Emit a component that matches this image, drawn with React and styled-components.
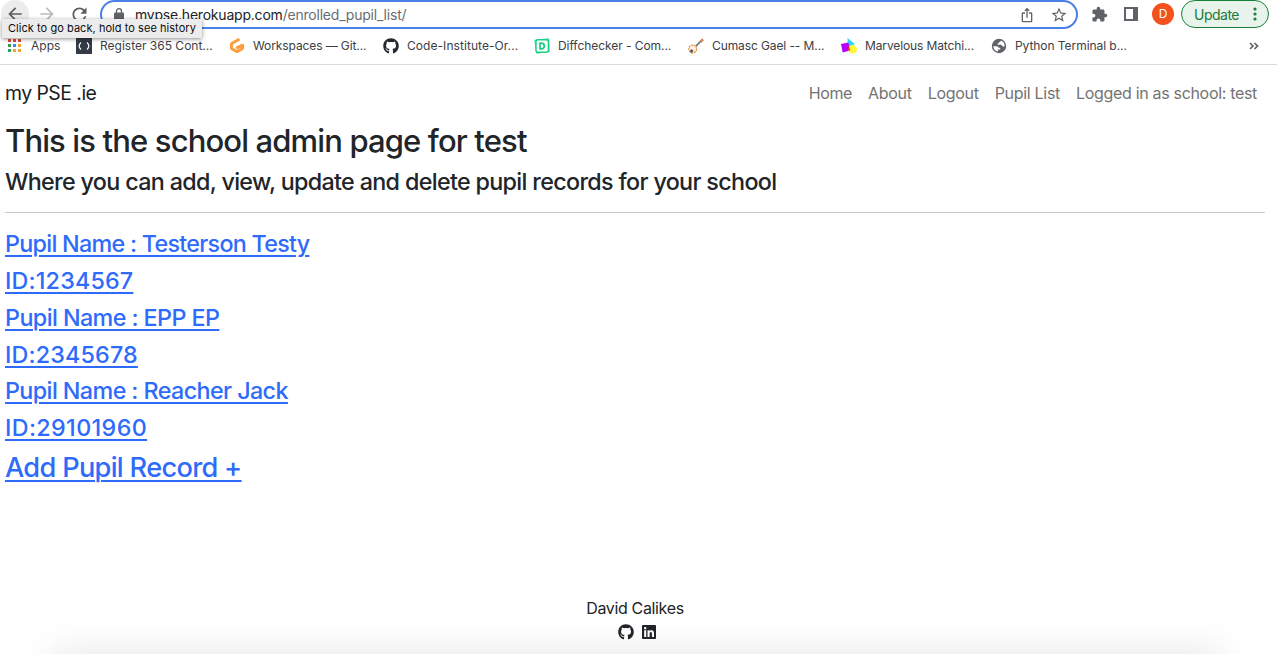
import React from "react";
import styled, { createGlobalStyle } from "styled-components";
import { FaGithub, FaLinkedin } from "react-icons/fa";
import {
  MdArrowBack, MdArrowForward, MdRefresh, MdExtension, MdStarBorder, MdOutlineIosShare,
} from "react-icons/md";

const GlobalStyle = createGlobalStyle`
  * { box-sizing: border-box; }
  html, body { margin: 0; background: #fff; overflow: hidden; }
  body { font-family: Inter, "Liberation Sans", sans-serif; color: #212529; }
`;

const Screen = styled.div`
  position: relative;
  display: flex;
  flex-direction: column;
  width: 1277px;
  height: 654px;
  overflow: hidden;
`;

const Toolbar = styled.div`
  display: flex;
  align-items: center;
  height: 28px;
  padding-right: 8px;
`;

const NavButton = styled.div`
  display: flex;
  align-items: center;
  justify-content: center;
  width: 28px;
  height: 28px;
  border-radius: 50%;
  margin-left: ${(p) => p.$left}px;
  color: ${(p) => (p.$dim ? "#b9bbbe" : "#5a5d61")};
  background: ${(p) => (p.$active ? "#ececed" : "transparent")};
`;

const AddressBar = styled.div`
  display: flex;
  align-items: center;
  width: 978px;
  height: 29px;
  margin: 0 0 -1px 7px;
  padding: 0 8px 0 12px;
  border: 2px solid #4a80e8;
  border-radius: 15px;
  color: #5f6368;
`;

const Url = styled.span`
  flex: 1;
  margin-left: 11px;
  font-size: 14px;
  line-height: 20px;
  letter-spacing: -0.21px;
  color: #6a6d71;
  b { font-weight: 400; color: #202124; }
`;

const BarIcon = styled.span`
  display: flex;
  margin-left: ${(p) => p.$left || 0}px;
  color: #5f6368;
`;

const Avatar = styled.div`
  width: 22px;
  height: 22px;
  margin-left: 14px;
  border-radius: 50%;
  background: #f4511e;
  color: #fff;
  font-size: 12px;
  line-height: 22px;
  text-align: center;
`;

const UpdateButton = styled.div`
  display: flex;
  align-items: center;
  justify-content: space-between;
  width: 88px;
  height: 28px;
  margin-left: 7px;
  padding: 0 11px 0 12px;
  border: 1px solid #188038;
  border-radius: 14px;
  background: #e8f3ec;
  color: #1c7a3c;
  font-size: 14px;
  letter-spacing: -0.5px;
`;

const Bookmarks = styled.div`
  display: flex;
  align-items: center;
  height: 37px;
  padding: 0 18px 0 7px;
  border-bottom: 1px solid #d9dadc;
`;

const Bookmark = styled.div`
  display: flex;
  align-items: center;
  width: ${(p) => p.$width}px;
  gap: 8px;
  svg { flex: none; }
`;

const BookmarkTitle = styled.span`
  font-size: 12px;
  line-height: 18px;
  white-space: nowrap;
  letter-spacing: ${(p) => p.$track || 0}px;
  color: #3c4043;
`;

const Overflow = styled.span`
  display: flex;
  margin-left: auto;
  color: #5f6368;
`;

const Tooltip = styled.div`
  position: absolute;
  left: 2px;
  top: 19px;
  width: 200px;
  height: 19px;
  padding-left: 6px;
  background: #ececec;
  box-shadow: 0 1px 4px rgba(0, 0, 0, 0.45);
  color: #0c0c0c;
  font-size: 11px;
  line-height: 19px;
  white-space: nowrap;
  letter-spacing: 0.05px;
`;

const Page = styled.main`
  display: flex;
  flex-direction: column;
  flex: 1;
  padding: 0 12px 0 5px;
  background: #fff;
`;

const SiteNav = styled.nav`
  display: flex;
  align-items: center;
  justify-content: space-between;
  height: 56px;
  padding-right: 8px;
`;

const Brand = styled.a`
  font-size: 19.4px;
  line-height: 30px;
  letter-spacing: -0.52px;
  color: #1a1c1e;
`;

const Links = styled.div`
  display: flex;
  gap: 16px;
`;

const NavLink = styled.a`
  font-size: 16px;
  line-height: 24px;
  letter-spacing: ${(p) => p.$track}px;
  color: #737373;
  white-space: nowrap;
`;

const Title = styled.h2`
  margin: 1px 0 7px;
  font-size: 31px;
  line-height: 38px;
  font-weight: 500;
  letter-spacing: -0.86px;
`;

const Subtitle = styled.h4`
  margin: 0;
  font-size: 23.3px;
  line-height: 29px;
  font-weight: 500;
  letter-spacing: -0.66px;
`;

const Rule = styled.hr`
  flex: none;
  width: 100%;
  height: 1px;
  margin: 16px 0 17.3px;
  border: 0;
  background: #c8c9ca;
`;

const Record = styled.h4`
  margin: 0 0 8px;
  font-size: 23.3px;
  line-height: 28.8px;
  font-weight: 500;
  letter-spacing: ${(p) => p.$track}px;
`;

const AddRecord = styled.h3`
  margin: 0;
  font-size: 27.2px;
  line-height: 33.6px;
  font-weight: 500;
  letter-spacing: -0.69px;
`;

const RecordLink = styled.a`
  color: #2f6bfb;
  text-decoration: underline;
  text-decoration-thickness: 2px;
  text-underline-offset: 2.5px;
`;

const Footer = styled.footer`
  display: flex;
  flex-direction: column;
  align-items: center;
  height: 58px;
  margin-top: auto;
  font-size: 16px;
  line-height: 24px;
  letter-spacing: -0.35px;
`;

const Social = styled.div`
  display: flex;
  gap: 7px;
  height: 24px;
  align-items: center;
  padding-left: 4px;
`;

const BottomShade = styled.div`
  position: absolute;
  left: 64px;
  right: 64px;
  top: 662px;
  height: 60px;
  box-shadow: 0 0 36px 12px rgba(0, 0, 0, 0.09);
`;

const LockIcon = () => (
  <svg width="10" height="13" viewBox="0 0 10 13">
    <rect y="4.5" width="10" height="8" rx="1" fill="#5f6368" />
    <path d="M2.5 5V3.2a2.5 2.5 0 0 1 5 0V5" fill="none" stroke="#5f6368" strokeWidth="1.3" />
  </svg>
);

const GlobeIcon = () => (
  <svg width="16" height="16" viewBox="0 0 16 16">
    <circle cx="8" cy="8" r="7.2" fill="#5f6368" />
    <path d="M2.2 8.2h3.6q1.7.1 1.8 1.6h1.6v1.6H7.1v2.1Q2.8 12.9 2.2 8.2ZM9.9 2.5q-.1 1.6-1.7 1.6-.1 1.2-1.5 1.3v1.4h3.1q1.6.1 1.6 1.6h2.3Q13.9 4 9.9 2.5Z" fill="#fff" />
  </svg>
);

const AppsIcon = () => (
  <svg width="16" height="16" viewBox="0 0 16 16">
    {["#e2483d", "#e2483d", "#e2483d", "#2f9e58", "#4285f4", "#eda72c", "#2f9e58", "#eda72c", "#eda72c"].map((c, i) => (
      <rect key={i} x={1 + (i % 3) * 5} y={1 + Math.floor(i / 3) * 5} width="3" height="3" fill={c} />
    ))}
  </svg>
);

const BracketIcon = () => (
  <svg width="16" height="16" viewBox="0 0 16 16">
    <rect width="16" height="16" fill="#343a46" />
    <path d="M5 4.5Q1.3 8 5 11.5M11 4.5Q14.7 8 11 11.5" fill="none" stroke="#fff" strokeWidth="1.2" />
  </svg>
);

const GitpodIcon = () => (
  <svg width="16" height="16" viewBox="0 0 16 16">
    <path d="M9.3 1.8 3.2 5.2q-.8.5-.8 1.3v3.3q0 .8.8 1.2l4 2.3q.8.5 1.6 0l4-2.3q.8-.4.8-1.2V7.2L8.4 9.7" fill="none" stroke="#ff9d3d" strokeWidth="3" strokeLinecap="round" strokeLinejoin="round" />
  </svg>
);

const DiffIcon = () => (
  <svg width="16" height="16" viewBox="0 0 16 16">
    <path d="M.8 2.3 14.6.8l.6 12.6L2.8 15.2Z" fill="#d2f7e4" stroke="#55dfa0" strokeWidth="1.2" strokeLinejoin="round" />
    <rect x="2" y="1.8" width="12.4" height="12.4" rx="2" fill="#fff" stroke="#19cf84" strokeWidth="1.4" />
    <path d="M6 5.2h1.5a2.8 2.8 0 0 1 0 5.6H6Z" fill="none" stroke="#19cf84" strokeWidth="1.7" />
  </svg>
);

const BanjoIcon = () => (
  <svg width="16" height="16" viewBox="0 0 16 16">
    <path d="M6.5 9.5 13 3" stroke="#666b70" strokeWidth="1.6" />
    <path d="m12 3 2-2.2 1.5 1.4-2.2 2.1Z" fill="#ee8b52" stroke="#b66a48" strokeWidth=".7" />
    <circle cx="4.7" cy="11" r="3.9" fill="#fff2e4" stroke="#eb9650" strokeWidth="1.3" strokeDasharray="2 .7" />
    <path d="m1.6 13 2.2-2 1.7 1.7-2 2.5Z" fill="#555b61" />
  </svg>
);

const ShapesIcon = () => (
  <svg width="16" height="16" viewBox="0 0 16 16">
    <path d="M6.5 0 14 6.2 6.8 9Z" fill="#27d9f5" />
    <path d="m0 6 7.4-1.5 1.7 8L1.7 14.5Z" fill="#b900fb" />
    <circle cx="11.7" cy="11.2" r="4.3" fill="#fff638" />
    <path d="m7.7 7.2 1.4 5.3-1.6.3q-.8-3 .2-5.6Z" fill="#e61632" />
  </svg>
);

const PanelIcon = () => (
  <svg width="14" height="14" viewBox="0 0 14 14">
    <path d="M1 1h12v12H1Z" fill="#fff" stroke="#5f6368" strokeWidth="2" />
    <path d="M9 0h5v14H9Z" fill="#5f6368" />
  </svg>
);

const DotsIcon = () => (
  <svg width="4" height="14" viewBox="0 0 4 14" fill="#188038">
    <circle cx="2" cy="2" r="1.6" /><circle cx="2" cy="7" r="1.6" /><circle cx="2" cy="12" r="1.6" />
  </svg>
);

const bookmarks = [
  { title: "Apps", icon: <AppsIcon />, width: 69, track: 0 },
  { title: "Register 365 Cont...", icon: <BracketIcon />, width: 153, track: 0 },
  { title: "Workspaces — Git...", icon: <GitpodIcon />, width: 154, track: -0.1 },
  { title: "Code-Institute-Or...", icon: <FaGithub size={16} color="#24292f" />, width: 151, track: 0.06 },
  { title: "Diffchecker - Com...", icon: <DiffIcon />, width: 154, track: -0.06 },
  { title: "Cumasc Gael -- M...", icon: <BanjoIcon />, width: 153, track: -0.1 },
  { title: "Marvelous Matchi...", icon: <ShapesIcon />, width: 150, track: -0.12 },
  { title: "Python Terminal b...", icon: <GlobeIcon />, width: 150, track: -0.06 },
];

const links = [
  ["Home", -0.35], ["About", -0.3], ["Logout", -0.3], ["Pupil List", -0.3], ["Logged in as school: test", -0.32],
];

const records = [
  ["Pupil Name : Testerson Testy", -0.71], ["ID:1234567", 0.18],
  ["Pupil Name : EPP EP", -0.57], ["ID:2345678", 0.17],
  ["Pupil Name : Reacher Jack", -0.58], ["ID:29101960", 0.37],
];

export default function App() {
  return (
    <Screen>
      <GlobalStyle />
      <Toolbar>
        <NavButton $left={1} $active><MdArrowBack size={20} /></NavButton>
        <NavButton $left={4} $dim><MdArrowForward size={20} /></NavButton>
        <NavButton $left={4}><MdRefresh size={21} /></NavButton>
        <AddressBar>
          <LockIcon />
          <Url><b>mypse.herokuapp.com</b>/enrolled_pupil_list/</Url>
          <BarIcon><MdOutlineIosShare size={16} /></BarIcon>
          <BarIcon $left={15}><MdStarBorder size={18} /></BarIcon>
        </AddressBar>
        <BarIcon $left={13}><MdExtension size={17} /></BarIcon>
        <BarIcon $left={16}><PanelIcon /></BarIcon>
        <Avatar>D</Avatar>
        <UpdateButton>Update<DotsIcon /></UpdateButton>
      </Toolbar>
      <Bookmarks>
        {bookmarks.map((b) => (
          <Bookmark key={b.title} $width={b.width}>
            {b.icon}
            <BookmarkTitle $track={b.track}>{b.title}</BookmarkTitle>
          </Bookmark>
        ))}
        <Overflow>
          <svg width="10" height="8" viewBox="0 0 10 8" fill="none" stroke="currentColor" strokeWidth="1.7">
            <path d="m1 1 3 3-3 3M5.5 1l3 3-3 3" />
          </svg>
        </Overflow>
      </Bookmarks>
      <Page>
        <SiteNav>
          <Brand>my PSE .ie</Brand>
          <Links>
            {links.map(([label, track]) => <NavLink key={label} $track={track}>{label}</NavLink>)}
          </Links>
        </SiteNav>
        <Title>This is the school admin page for test</Title>
        <Subtitle>Where you can add, view, update and delete pupil records for your school</Subtitle>
        <Rule />
        {records.map(([label, track]) => (
          <Record key={label} $track={track}><RecordLink>{label}</RecordLink></Record>
        ))}
        <AddRecord><RecordLink>Add Pupil Record +</RecordLink></AddRecord>
        <Footer>
          <span>David Calikes</span>
          <Social><FaGithub size={16} /><FaLinkedin size={16} /></Social>
        </Footer>
      </Page>
      <BottomShade />
      <Tooltip>Click to go back, hold to see history</Tooltip>
    </Screen>
  );
}
